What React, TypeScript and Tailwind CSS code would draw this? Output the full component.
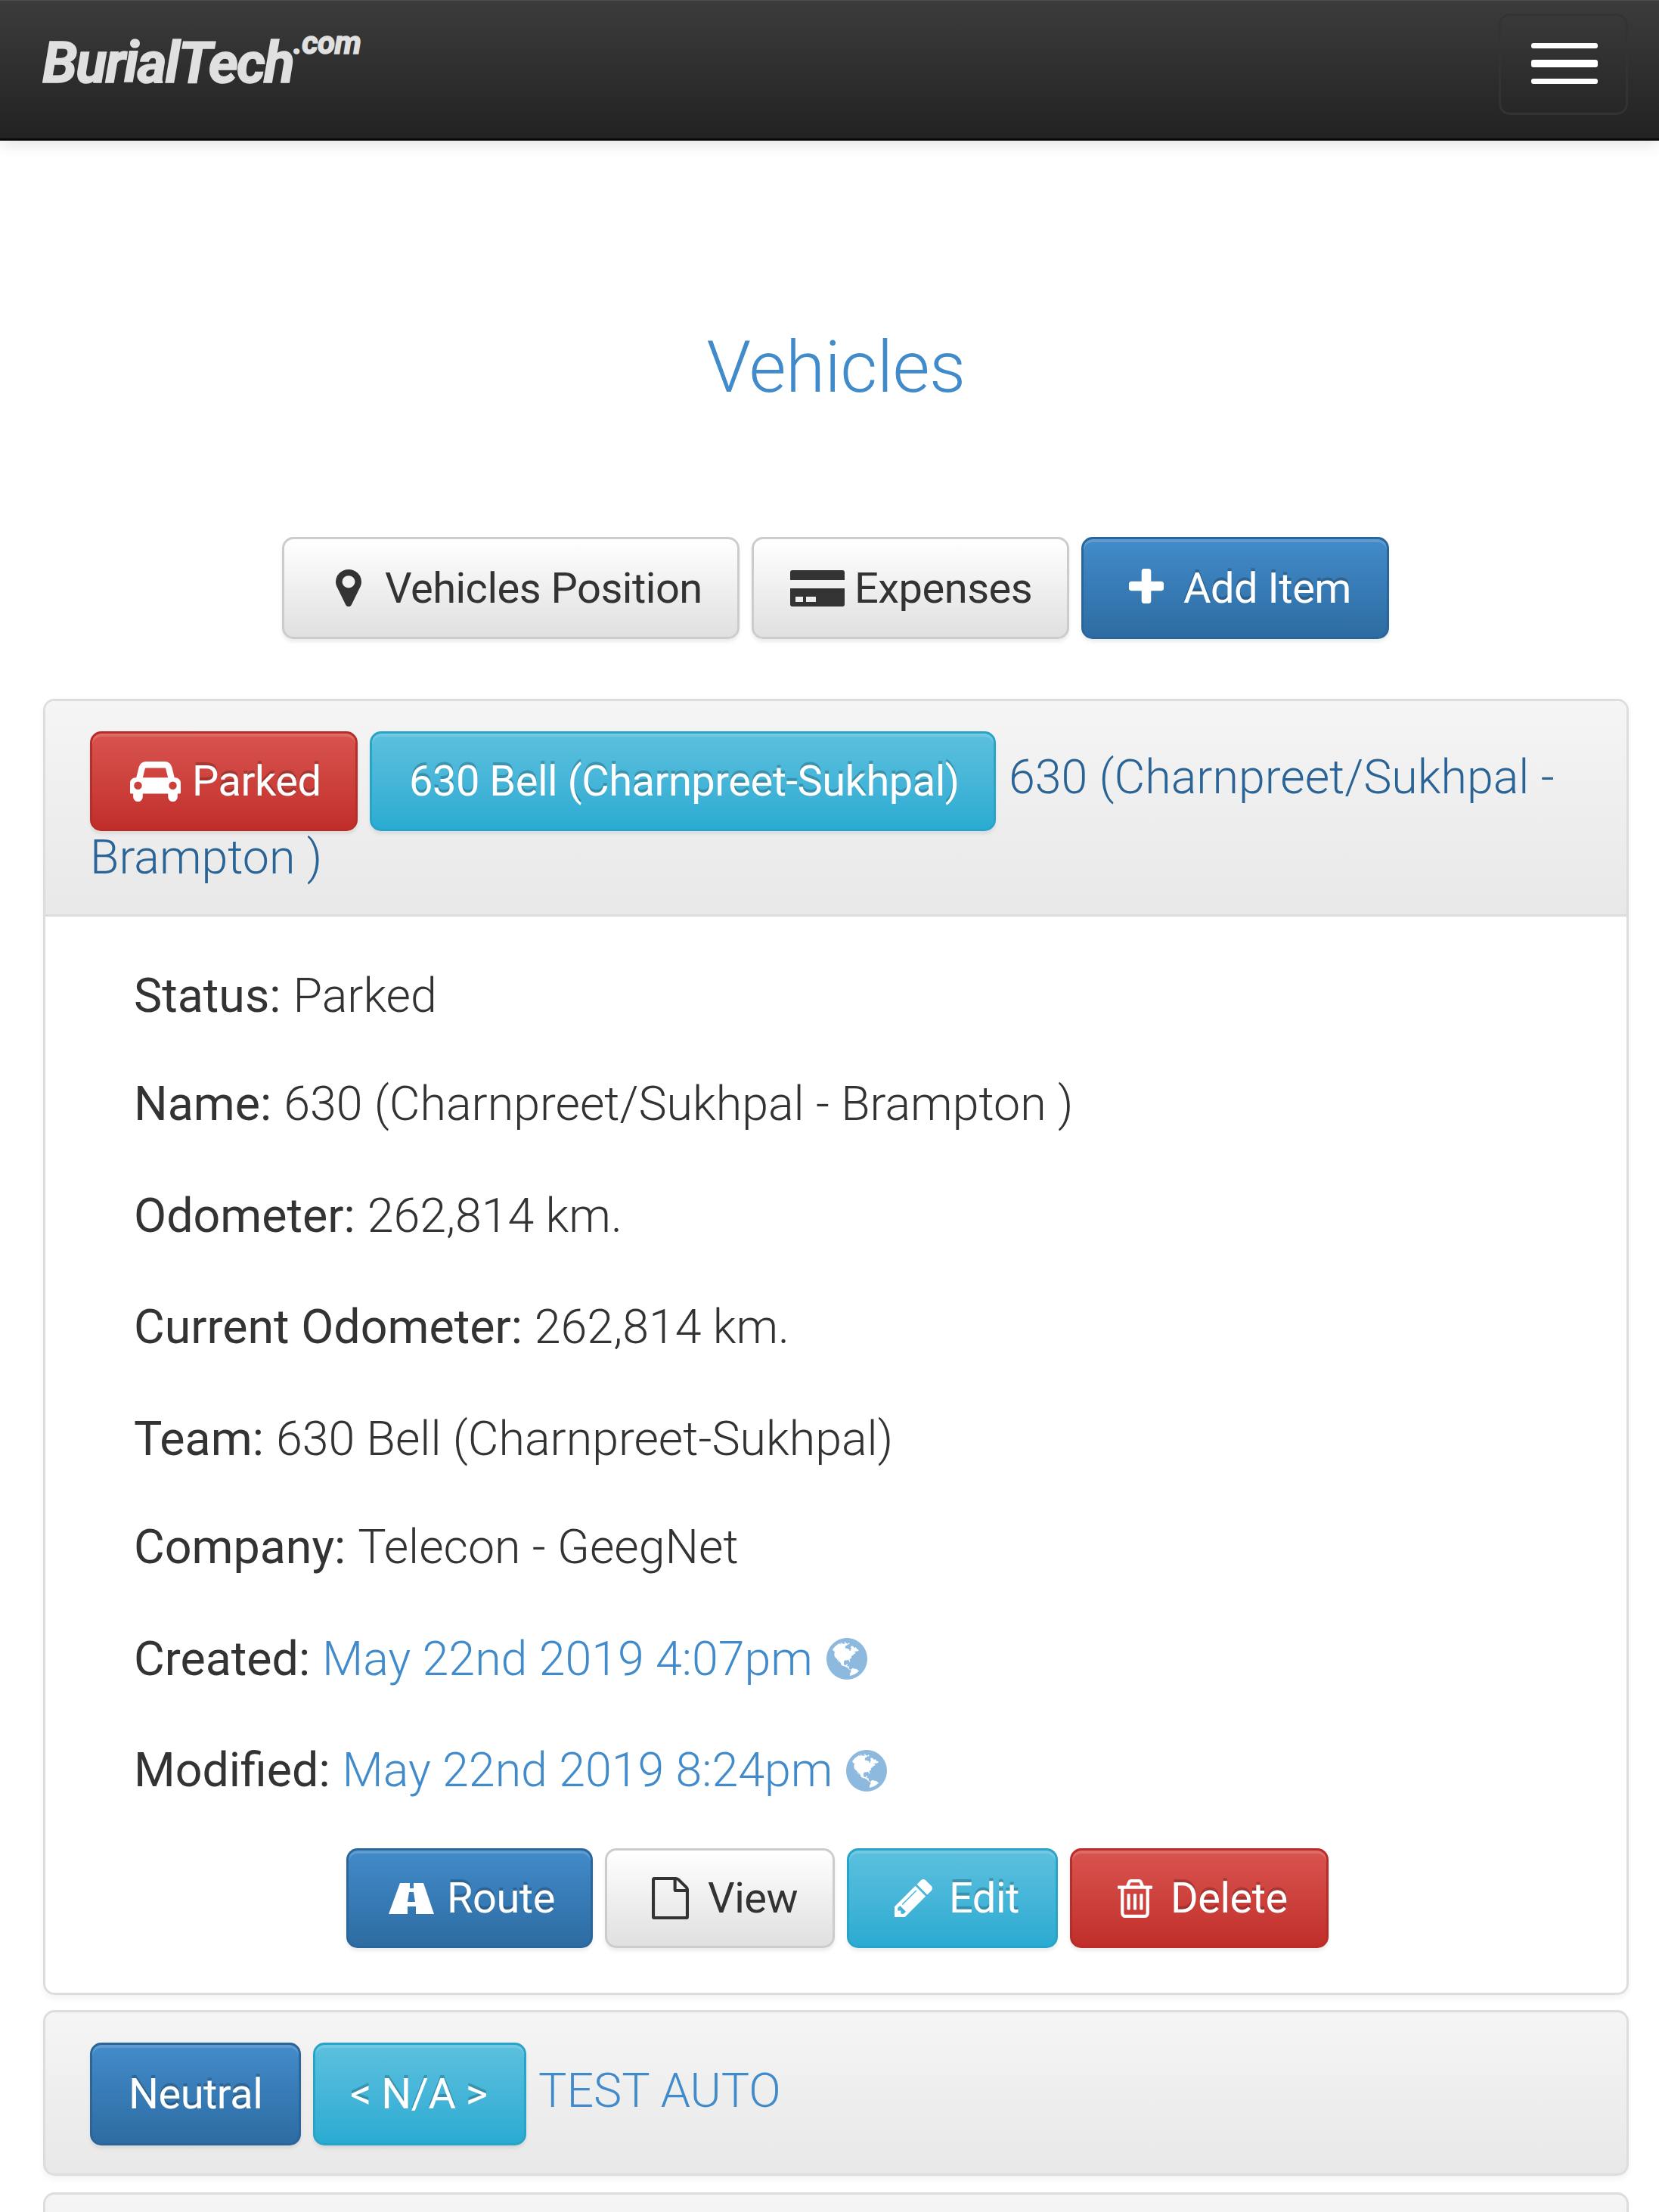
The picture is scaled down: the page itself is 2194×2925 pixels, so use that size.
import React from "react";

const PATHS = {
  marker:
    "M1152 640q0-106-75-181t-181-75-181 75-75 181 75 181 181 75 181-75 75-181zm256 0q0 109-33 179l-364 774q-16 33-47.5 52t-67.5 19-67.5-19-46.5-52l-365-774q-33-70-33-179 0-212 150-362t362-150 362 150 150 362z",
  plus:
    "M1600 736v192q0 40-28 68t-68 28h-416v416q0 40-28 68t-68 28h-192q-40 0-68-28t-28-68v-416h-416q-40 0-68-28t-28-68v-192q0-40 28-68t68-28h416v-416q0-40 28-68t68-28h192q40 0 68 28t28 68v416h416q40 0 68 28t28 68z",
  car:
    "M480 1088q0-66-47-113t-113-47-113 47-47 113 47 113 113 47 113-47 47-113zm36-320h1016l-89-357q-2-8-14-17.5t-21-9.5h-768q-9 0-21 9.5t-14 17.5zm1372 320q0-66-47-113t-113-47-113 47-47 113 47 113 113 47 113-47 47-113zm160-96v384q0 14-9 23t-23 9h-96v128q0 80-56 136t-136 56-136-56-56-136v-128h-1024v128q0 80-56 136t-136 56-136-56-56-136v-128h-96q-14 0-23-9t-9-23v-384q0-93 65.5-158.5t158.5-65.5h28l105-419q23-94 104-157.5t179-63.5h768q98 0 179 63.5t104 157.5l105 419h28q93 0 158.5 65.5t65.5 158.5z",
  file:
    "M1596 380q28 28 48 76t20 88v1152q0 40-28 68t-68 28h-1344q-40 0-68-28t-28-68v-1600q0-40 28-68t68-28h896q40 0 88 20t76 48zm-444-244v376h376q-10-29-22-41l-313-313q-12-12-41-22zm384 1528v-1024h-416q-40 0-68-28t-28-68v-416h-768v1536h1280z",
  pencil:
    "M491 1536l91-91-235-235-91 91v107h128v128h107zm523-928q0-22-22-22-10 0-17 7l-542 542q-7 7-7 17 0 22 22 22 10 0 17-7l542-542q7-7 7-17zm-54-192l416 416-832 832h-416v-416zm683 96q0 53-37 90l-166 166-416-416 166-165q36-38 90-38 53 0 91 38l235 234q37 39 37 91z",
  trash:
    "M704 736v576q0 14-9 23t-23 9h-64q-14 0-23-9t-9-23v-576q0-14 9-23t23-9h64q14 0 23 9t9 23zm256 0v576q0 14-9 23t-23 9h-64q-14 0-23-9t-9-23v-576q0-14 9-23t23-9h64q14 0 23 9t9 23zm256 0v576q0 14-9 23t-23 9h-64q-14 0-23-9t-9-23v-576q0-14 9-23t23-9h64q14 0 23 9t9 23zm128 724v-948h-896v948q0 22 7 40.5t14.5 27 10.5 8.5h832q3 0 10.5-8.5t14.5-27 7-40.5zm-672-1076h448l-48-117q-7-9-17-11h-317q-10 2-17 11zm928 32v64q0 14-9 23t-23 9h-96v948q0 83-47 143.5t-113 60.5h-832q-66 0-113-58.5t-47-141.5v-952h-96q-14 0-23-9t-9-23v-64q0-14 9-23t23-9h309l70-167q15-37 54-63t79-26h320q40 0 79 26t54 63l70 167h309q14 0 23 9t9 23z",
  globe:
    "M896 128q209 0 385.5 103t279.5 279.5 103 385.5-103 385.5-279.5 279.5-385.5 103-385.5-103-279.5-279.5-103-385.5 103-385.5 279.5-279.5 385.5-103zm274 521q-2 1-9.5 9.5t-13.5 9.5q2 0 4.5-5t5-11 3.5-7q6-7 22-15 14-6 52-12 34-8 51 11-2-2 9.5-13t14.5-12q3-2 15-4.5t15-7.5l2-22q-12 1-17.5-7t-6.5-21q0 2-6 8 0-7-4.5-8t-11.5 1-9 1q-10-3-15-7.5t-8-16.5-4-15q-2-5-9.5-11t-9.5-10q-1-2-2.5-5.5t-3-6.5-4-5.5-5.5-2.5-7 5-7.5 10-4.5 5q-3-2-6-1.5t-4.5 1-4.5 3-5 3.5q-3 2-8.5 3t-8.5 2q15-5-1-11-10-4-16-3 9-4 7.5-12t-8.5-14h5q-1-4-8.5-8.5t-17.5-8.5-13-6q-8-5-34-9.5t-33-.5q-5 6-4.5 10.5t4 14 3.5 12.5q1 6-5.5 13t-6.5 12q0 7 14 15.5t10 21.5q-3 8-16 16t-16 12q-5 8-1.5 18.5t10.5 16.5q2 2 1.5 4t-3.5 4.5-5.5 4-6.5 3.5l-3 2q-11 5-20.5-6t-13.5-26q-7-25-16-30-23-8-29 1-5-13-41-26-25-9-58-4 6-1 0-15-7-15-19-12 3-6 4-17.5t1-13.5q3-13 12-23 1-1 7-8.5t9.5-13.5.5-6q35 4 50-11 5-5 11.5-17t10.5-17q9-6 14-5.5t14.5 5.5 14.5 5q14 1 15.5-11t-7.5-20q12 1 3-17-4-7-8-9-12-4-27 5-8 4 2 8-1-1-9.5 10.5t-16.5 17.5-16-5q-1-1-5.5-13.5t-9.5-13.5q-8 0-16 15 3-8-11-15t-24-8q19-12-8-27-7-4-20.5-5t-19.5 4q-5 7-5.5 11.5t5 8 10.5 5.5 11.5 4 8.5 3q14 10 8 14-2 1-8.5 3.5t-11.5 4.5-6 4q-3 4 0 14t-2 14q-5-5-9-17.5t-7-16.5q7 9-25 6l-10-1q-4 0-16 2t-20.5 1-13.5-8q-4-8 0-20 1-4 4-2-4-3-11-9.5t-10-8.5q-46 15-94 41 6 1 12-1 5-2 13-6.5t10-5.5q34-14 42-7l5-5q14 16 20 25-7-4-30-1-20 6-22 12 7 12 5 18-4-3-11.5-10t-14.5-11-15-5q-16 0-22 1-146 80-235 222 7 7 12 8 4 1 5 9t2.5 11 11.5-3q9 8 3 19 1-1 44 27 19 17 21 21 3 11-10 18-1-2-9-9t-9-4q-3 5 .5 18.5t10.5 12.5q-7 0-9.5 16t-2.5 35.5-1 23.5l2 1q-3 12 5.5 34.5t21.5 19.5q-13 3 20 43 6 8 8 9 3 2 12 7.5t15 10 10 10.5q4 5 10 22.5t14 23.5q-2 6 9.5 20t10.5 23q-1 0-2.5 1t-2.5 1q3 7 15.5 14t15.5 13q1 3 2 10t3 11 8 2q2-20-24-62-15-25-17-29-3-5-5.5-15.5t-4.5-14.5q2 0 6 1.5t8.5 3.5 7.5 4 2 3q-3 7 2 17.5t12 18.5 17 19 12 13q6 6 14 19.5t0 13.5q9 0 20 10t17 20q5 8 8 26t5 24q2 7 8.5 13.5t12.5 9.5l16 8 13 7q5 2 18.5 10.5t21.5 11.5q10 4 16 4t14.5-2.5 13.5-3.5q15-2 29 15t21 21q36 19 55 11-2 1 .5 7.5t8 15.5 9 14.5 5.5 8.5q5 6 18 15t18 15q6-4 7-9-3 8 7 20t18 10q14-3 14-32-31 15-49-18 0-1-2.5-5.5t-4-8.5-2.5-8.5 0-7.5 5-3q9 0 10-3.5t-2-12.5-4-13q-1-8-11-20t-12-15q-5 9-16 8t-16-9q0 1-1.5 5.5t-1.5 6.5q-13 0-15-1 1-3 2.5-17.5t3.5-22.5q1-4 5.5-12t7.5-14.5 4-12.5-4.5-9.5-17.5-2.5q-19 1-26 20-1 3-3 10.5t-5 11.5-9 7q-7 3-24 2t-24-5q-13-8-22.5-29t-9.5-37q0-10 2.5-26.5t3-25-5.5-24.5q3-2 9-9.5t10-10.5q2-1 4.5-1.5t4.5 0 4-1.5 3-6q-1-1-4-3-3-3-4-3 7 3 28.5-1.5t27.5 1.5q15 11 22-2 0-1-2.5-9.5t-.5-13.5q5 27 29 9 3 3 15.5 5t17.5 5q3 2 7 5.5t5.5 4.5 5-.5 8.5-6.5q10 14 12 24 11 40 19 44 7 3 11 2t4.5-9.5 0-14-1.5-12.5l-1-8v-18l-1-8q-15-3-18.5-12t1.5-18.5 15-18.5q1-1 8-3.5t15.5-6.5 12.5-8q21-19 15-35 7 0 11-9-1 0-5-3t-7.5-5-4.5-2q9-5 2-16 5-3 7.5-11t7.5-10q9 12 21 2 7-8 1-16 5-7 20.5-10.5t18.5-9.5q7 2 8-2t1-12 3-12q4-5 15-9t13-5l17-11q3-4 0-4 18 2 31-11 10-11-6-20 3-6-3-9.5t-15-5.5q3-1 11.5-.5t10.5-1.5q15-10-7-16-17-5-43 12zm-163 877q206-36 351-189-3-3-12.5-4.5t-12.5-3.5q-18-7-24-8 1-7-2.5-13t-8-9-12.5-8-11-7q-2-2-7-6t-7-5.5-7.5-4.5-8.5-2-10 1l-3 1q-3 1-5.5 2.5t-5.5 3-4 3 0 2.5q-21-17-36-22-5-1-11-5.5t-10.5-7-10-1.5-11.5 7q-5 5-6 15t-2 13q-7-5 0-17.5t2-18.5q-3-6-10.5-4.5t-12 4.5-11.5 8.5-9 6.5-8.5 5.5-8.5 7.5q-3 4-6 12t-5 11q-2-4-11.5-6.5t-9.5-5.5q2 10 4 35t5 38q7 31-12 48-27 25-29 40-4 22 12 26 0 7-8 20.5t-7 21.5q0 6 2 16z",
};

function Icon({ d, box, className }: { d: string; box: string; className: string }) {
  return (
    <svg viewBox={box} className={`shrink-0 ${className}`} fill="currentColor" preserveAspectRatio="none" aria-hidden="true">
      <path d={d} />
    </svg>
  );
}

const TONES = {
  plain:
    "border-[#cccccc] bg-linear-to-b from-white to-[#e0e0e0] text-[#333333] shadow-[inset_0_4px_0_rgba(255,255,255,0.15),0_4px_4px_rgba(0,0,0,0.075)]",
  blue:
    "border-[#2b669a] bg-linear-to-b from-[#428bca] to-[#2d6ca2] text-white shadow-[inset_0_4px_0_rgba(255,255,255,0.15),0_4px_4px_rgba(0,0,0,0.075)] [text-shadow:0_-4px_0_rgba(0,0,0,0.2)]",
  sky:
    "border-[#28a4c9] bg-linear-to-b from-[#5bc0de] to-[#2aabd2] text-white shadow-[inset_0_4px_0_rgba(255,255,255,0.15),0_4px_4px_rgba(0,0,0,0.075)] [text-shadow:0_-4px_0_rgba(0,0,0,0.2)]",
  red:
    "border-[#b92c28] bg-linear-to-b from-[#d9534f] to-[#c12e2a] text-white shadow-[inset_0_4px_0_rgba(255,255,255,0.15),0_4px_4px_rgba(0,0,0,0.075)] [text-shadow:0_-4px_0_rgba(0,0,0,0.2)]",
};

function Button({ tone, className, children }: { tone: keyof typeof TONES; className: string; children: React.ReactNode }) {
  return (
    <button
      type="button"
      className={`flex shrink-0 items-center rounded-[15px] border-[3px] text-[56px] leading-[80px] font-normal tracking-[-0.5px] whitespace-nowrap ${TONES[tone]} ${className}`}
    >
      {children}
    </button>
  );
}

function Row({ label, className = "", children }: { label: string; className?: string; children: React.ReactNode }) {
  return (
    <div className={`flex h-[147.5px] items-center whitespace-nowrap ${className}`}>
      <span className="font-normal">{label}:</span>
      <span className="ml-[16px] font-light">{children}</span>
    </div>
  );
}

function Stamp({ children }: { children: React.ReactNode }) {
  return (
    <span className="flex items-center text-[#428bca]">
      {children}
      <Icon d={PATHS.globe} box="128 128 1536 1536" className="ml-[18px] h-[55px] w-[54px] opacity-60" />
    </span>
  );
}

export default function App() {
  return (
    <div className="h-[2925px] w-[2194px] overflow-hidden bg-white font-['Roboto',sans-serif] text-[#333333]">
      <header className="flex h-[186px] items-start justify-between border-b-[3px] border-[#090909] bg-linear-to-b from-[#3c3c3c] to-[#222222] pr-[41px] pl-[56px] shadow-[inset_0_1px_0_rgba(255,255,255,0.1),0_4px_20px_rgba(0,0,0,0.12)]">
        <div className="flex items-start font-bold text-[#e0e0e0] italic [-webkit-text-stroke:1.5px_#e0e0e0]">
          <span className="mt-[38px] text-[75px] leading-[90px] tracking-[-1.9px]">BurialTech</span>
          <span className="mt-[32px] text-[42px] leading-[50px] tracking-[-0.5px]">.com</span>
        </div>
        <button
          type="button"
          aria-label="Menu"
          className="mt-[18px] flex h-[134px] w-[171px] flex-col items-center rounded-[15px] border-[3px] border-[#333333] pt-[36px] pl-[2px]"
        >
          <span className="h-[7px] w-[88px] rounded-[3px] bg-white" />
          <span className="mt-[15px] h-[10px] w-[88px] rounded-[3px] bg-white" />
          <span className="mt-[15px] h-[7px] w-[88px] rounded-[3px] bg-white" />
        </button>
      </header>

      <h1 className="mt-[240px] pl-[17px] text-center text-[95px] leading-[120px] font-light tracking-[-0.6px] text-[#428bca]">
        Vehicles
      </h1>

      <div className="mt-[164px] ml-[373px] flex gap-[16px]">
        <Button tone="plain" className="h-[135px] w-[605px] pl-[68px]">
          <Icon d={PATHS.marker} box="384 128 1024 1536" className="mr-[31px] h-[49px] w-[34px]" />
          Vehicles Position
        </Button>
        <Button tone="plain" className="h-[135px] w-[420px] pl-[48px]">
          <Icon
            d="M3 0H69Q72 0 72 3V13H0V3Q0 0 3 0ZM0 24H72V45Q72 48 69 48H3Q0 48 0 45ZM7 35V42H17V35ZM21 35V42H34V35Z"
            box="0 0 72 48"
            className="mr-[13px] h-[48px] w-[72px]"
          />
          Expenses
        </Button>
        <Button tone="blue" className="h-[135px] w-[407px] pl-[60px]">
          <Icon d={PATHS.plus} box="192 128 1408 1408" className="mr-[26px] mb-[5px] h-[46px] w-[46px]" />
          Add Item
        </Button>
      </div>

      <main className="mt-[79px] ml-[57px] flex w-[2097px] flex-col gap-[20px]">
        <section className="h-[1714px] overflow-hidden rounded-[15px] border-[3px] border-[#dddddd] shadow-[0_4px_8px_rgba(0,0,0,0.05)]">
          <div className="h-[285px] border-b-[3px] border-[#dddddd] bg-linear-to-b from-[#f5f5f5] to-[#e8e8e8] px-[59px] pt-[40px] text-[62.7px] font-light text-[#2a6496]">
            <div className="flex h-[132px] items-start">
              <Button tone="red" className="h-[132px] w-[354px] pl-[50px]">
                <Icon d={PATHS.car} box="0 128 2048 1600" className="mr-[15px] h-[53px] w-[67px]" />
                Parked
              </Button>
              <Button tone="sky" className="ml-[16px] h-[132px] w-[828px] pl-[49px]">
                630 Bell (Charnpreet-Sukhpal)
              </Button>
              <span className="ml-[17px] pt-[7px] leading-[108px] whitespace-nowrap">630 (Charnpreet/Sukhpal -</span>
            </div>
            <div className="-mt-[19px] leading-[108px]">Brampton )</div>
          </div>
          <div className="pt-[31px] pl-[117px] text-[62.7px]">
            <Row label="Status" className="-mb-[4px]">
              Parked
            </Row>
            <Row label="Name">630 (Charnpreet/Sukhpal - Brampton )</Row>
            <Row label="Odometer">262,814 km.</Row>
            <Row label="Current Odometer">262,814 km.</Row>
            <Row label="Team" className="-mb-[4px]">
              630 Bell (Charnpreet-Sukhpal)
            </Row>
            <Row label="Company">Telecon - GeegNet</Row>
            <Row label="Created">
              <Stamp>May 22nd 2019 4:07pm</Stamp>
            </Row>
            <Row label="Modified">
              <Stamp>May 22nd 2019 8:24pm</Stamp>
            </Row>
          </div>
          <div className="mt-[29px] ml-[398px] flex gap-[16px]">
            <Button tone="blue" className="h-[132px] w-[326px] pl-[53px]">
              <Icon
                d="M15 0H28V7H33V0H46L60 41H36V31H25V41H0ZM27 12L25 25H35L33 12Z"
                box="0 0 60 41"
                className="mr-[17px] h-[41px] w-[60px]"
              />
              Route
            </Button>
            <Button tone="plain" className="h-[132px] w-[304px] pl-[59px]">
              <Icon d={PATHS.file} box="128 0 1536 1792" className="mr-[25px] h-[56px] w-[49px]" />
              View
            </Button>
            <Button tone="sky" className="h-[132px] w-[279px] pl-[60px]">
              <Icon d={PATHS.pencil} box="128 149 1515 1515" className="mr-[22px] h-[50px] w-[50px]" />
              Edit
            </Button>
            <Button tone="red" className="h-[132px] w-[342px] pl-[60px]">
              <Icon d={PATHS.trash} box="192 128 1408 1536" className="mr-[24px] h-[51px] w-[46px]" />
              Delete
            </Button>
          </div>
        </section>

        <section className="flex h-[219px] items-start rounded-[15px] border-[3px] border-[#dddddd] bg-linear-to-b from-[#f5f5f5] to-[#e8e8e8] pt-[40px] pl-[59px] text-[62.7px] font-light text-[#428bca] shadow-[0_4px_8px_rgba(0,0,0,0.05)]">
          <Button tone="blue" className="h-[136px] w-[279px] pl-[48px]">
            Neutral
          </Button>
          <Button tone="sky" className="ml-[16px] h-[136px] w-[282px] pl-[46px]">
            &lt; N/A &gt;
          </Button>
          <span className="ml-[16px] pt-[10px] leading-[108px]">TEST AUTO</span>
        </section>

        <section className="mt-[2px] h-[219px] rounded-[15px] border-[3px] border-[#dddddd] bg-linear-to-b from-[#f5f5f5] to-[#e8e8e8]" />
      </main>
    </div>
  );
}
